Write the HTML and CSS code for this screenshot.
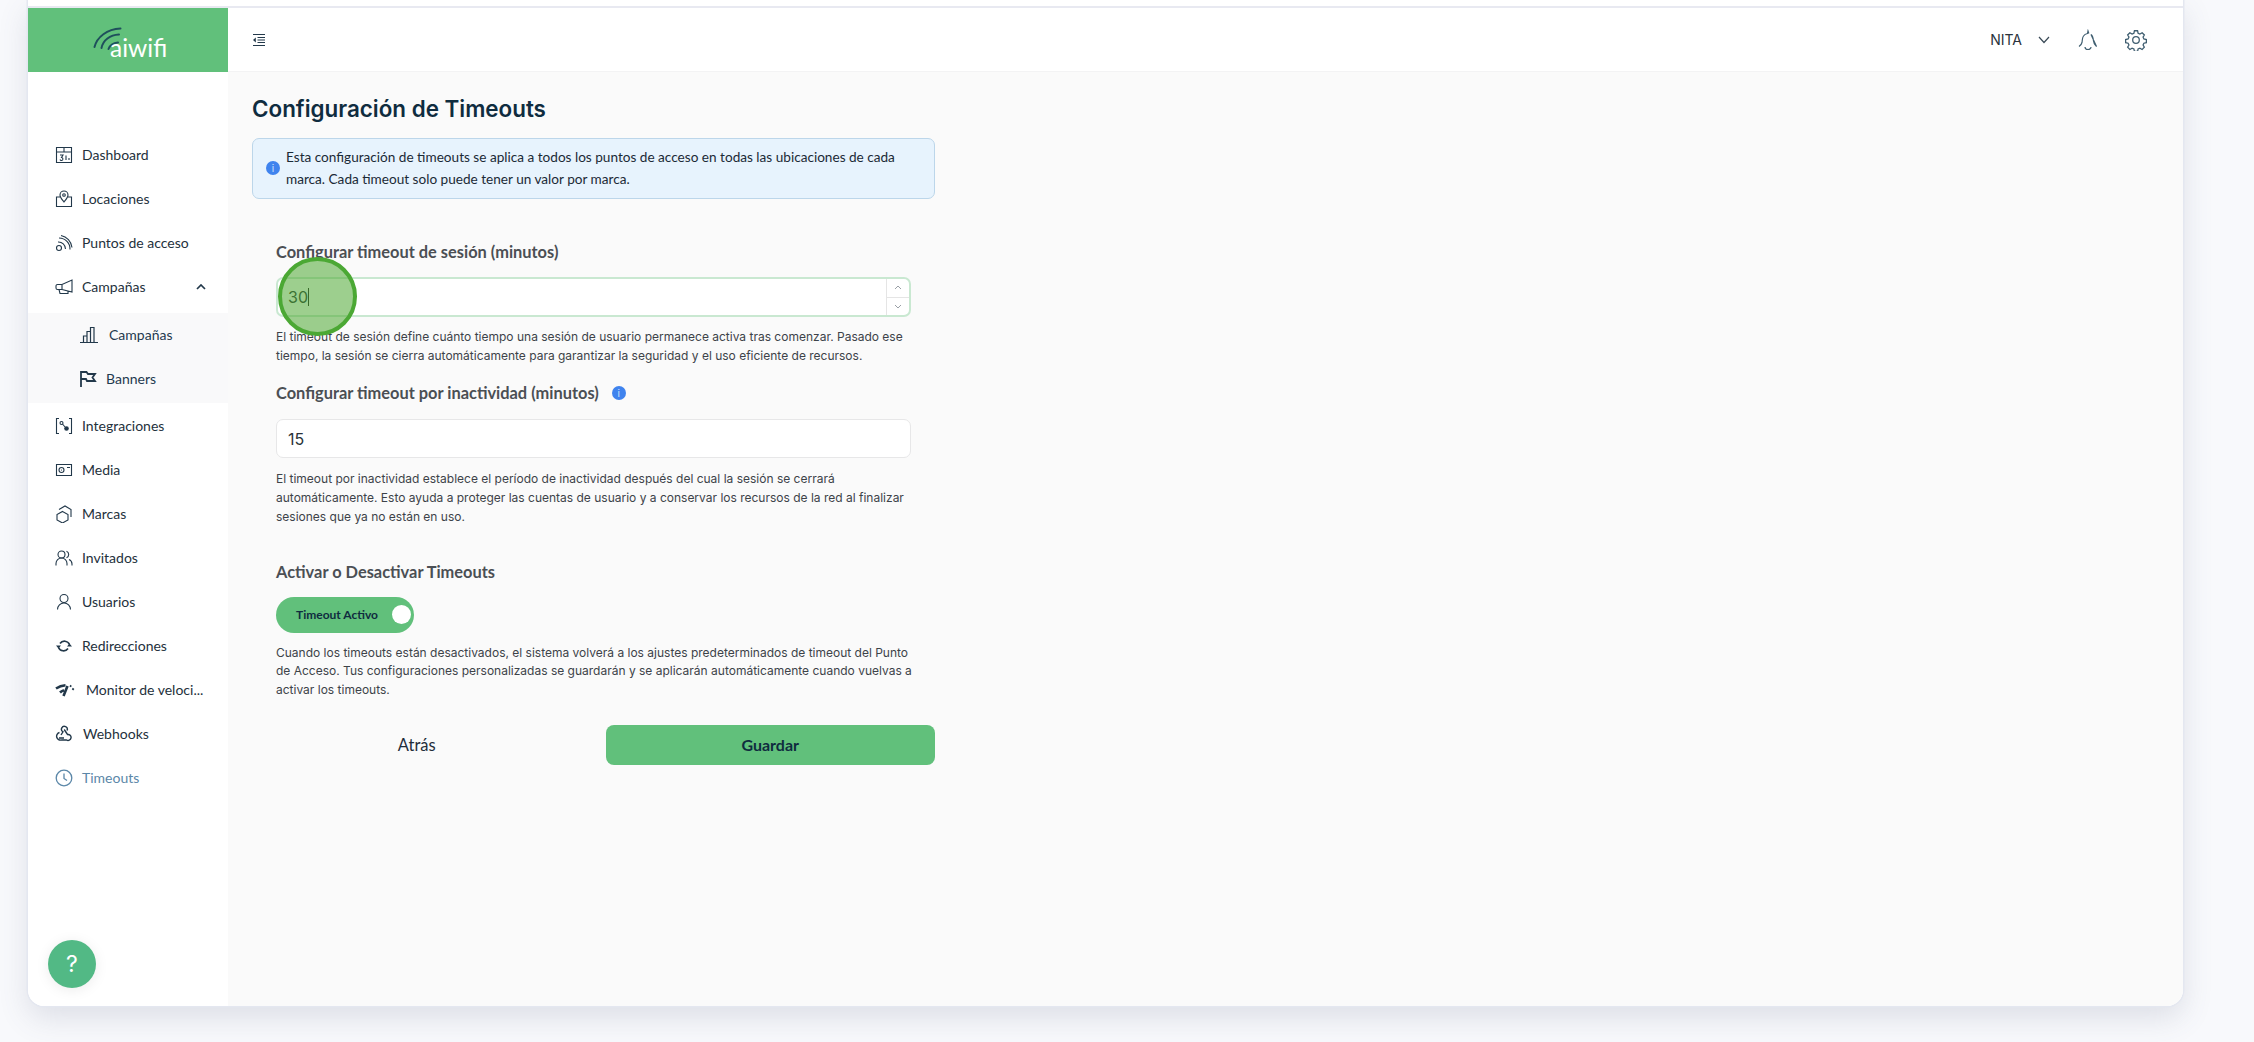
FILE: index.html
```html
<!DOCTYPE html>
<html lang="es">
<head>
<meta charset="utf-8">
<title>Configuración de Timeouts</title>
<link rel="stylesheet" href="styles.css">
</head>
<body>
<div class="window">
  <div class="strip"></div>
  <div class="app">
    <aside class="sidebar">
      <div class="logo">
        <svg class="logo-arcs" width="30" height="24" viewBox="0 0 30 24" fill="none" stroke="#1f4f5c" stroke-width="2" stroke-linecap="round"><path d="M1.500 20C4 10 14 2 27.500 1.500"/><path d="M8.500 21C10 13 17 8 26 7.500"/><path d="M15.500 22C17 18 20 16 25 15.500"/></svg>
        <span class="logo-text">aiwifi</span>
      </div>
      <nav class="nav">
        <a class="item"><svg class="ic" viewBox="0 0 18 18"><path d="M1.500 1.500h15v15h-15zM1.500 6h15M9 1.500V6M5 9h3l-1.500 2.500a1.500 1.500 0 1 1-1.500 2M11 9.500v4.500M14 12v2"/></svg>Dashboard</a>
        <a class="item"><svg class="ic" viewBox="0 0 18 18"><path d="M5 7H1.500v9.500h15V7H13M9 12C7 9.500 5 7.500 5 5a4 4 0 0 1 8 0c0 2.500-2 4.500-4 7z"/><circle cx="9" cy="5" r="1.300"/></svg>Locaciones</a>
        <a class="item"><svg class="ic" viewBox="0 0 18 18"><circle cx="4" cy="14" r="2.500"/><path d="M3 8a7 7 0 0 1 7.500 7M4 4a11 11 0 0 1 11 11.500M6 1.500a14 14 0 0 1 11 12"/></svg>Puntos de acceso</a>
        <a class="item"><svg class="ic" viewBox="0 0 18 18"><path d="M17 2v12L7 11.500H2.500A1.500 1.500 0 0 1 1 10V8a1.500 1.500 0 0 1 1.500-1.500H7zM4 11.500l1 4h8v-2.500M7 6.500v5"/></svg>Campañas<svg class="caret" viewBox="0 0 10 6"><path d="M1 5l4-4 4 4"/></svg></a>
        <div class="sub">
          <a class="item sub-a"><svg class="ic" viewBox="0 0 18 18"><path d="M0 16.500h18M3.500 16.500V10h3.500v6.500M7 16.500V5.500h3.500v11M10.500 16.500V1.500H14v15"/></svg>Campañas</a>
          <a class="item sub-b"><svg class="ic flag" viewBox="0 0 18 18"><path d="M2 17V2h5.500L9 4h7l-2.500 3.500L16 11H8L7 9H2"/></svg>Banners</a>
        </div>
        <a class="item"><svg class="ic" viewBox="0 0 18 18"><path d="M4 1.500H1.500v15H4M14 1.500h2.500v15H14"/><circle cx="6.500" cy="6" r="1.500"/><circle class="solid" cx="11.500" cy="11.500" r="2.300"/><path d="M7.500 7l2.500 3"/></svg>Integraciones</a>
        <a class="item"><svg class="ic" viewBox="0 0 18 18"><path d="M1.500 3.500h15v11h-15zM12 6.500h3"/><circle cx="6.500" cy="9" r="2.500"/><circle class="solid" cx="6.500" cy="9" r=".6"/></svg>Media</a>
        <a class="item"><svg class="ic" viewBox="0 0 18 18"><path d="M7.500 6.500l5.500 3v5.500l-5.500 3-5.500-3V9.500zM4 4.500L10 1l6 3.500V12"/></svg>Marcas</a>
        <a class="item"><svg class="ic" viewBox="0 0 18 18"><circle cx="6.500" cy="5.500" r="3.500"/><path d="M1 16.500v-2a5 5 0 0 1 11 0v2M11.500 2.200a3.500 3.500 0 0 1 0 6.500M14 10.500a5 5 0 0 1 3 4.500v1.500"/></svg>Invitados</a>
        <a class="item"><svg class="ic" viewBox="0 0 18 18"><circle cx="9" cy="5.500" r="4"/><path d="M2.500 16.500a6.500 6.500 0 0 1 13 0"/></svg>Usuarios</a>
        <a class="item"><svg class="ic ic-bold" viewBox="0 0 18 18"><path d="M14.500 7.500A5.500 5.500 0 0 0 5 6.500M3.500 10.500A5.500 5.500 0 0 0 13 11.500"/><path class="solid" d="M1 8.500h5L3.500 11.500zM17 9.500h-5l2.500-3z"/></svg>Redirecciones</a>
        <a class="item"><svg class="ic ic-mon" viewBox="0 0 20 14"><path d="M1 5.500C4 3.500 7 2.500 10.500 2.200M5 9.500c1-1 2.500-1.800 4-2.300M8.500 13L12.500 3"/><path class="dots" d="M15 2.500l1.300 1.200M17.300 5.500l1.500 1.200"/></svg><span class="trunc">Monitor de veloci...</span></a>
        <a class="item item-web"><svg class="ic ic-web" viewBox="0 0 18 18"><path d="M6 10L8 6.800A2.900 2.900 0 1 1 12 5.500M9.200 4.500L12.500 9.500A3 3 0 1 1 11.500 15H6.500M9 13H4M4.500 7.500A3.800 3.800 0 1 0 6.500 15"/></svg>Webhooks</a>
        <a class="item active"><svg class="ic" viewBox="0 0 18 18"><circle cx="9" cy="9" r="7.800"/><path d="M9 4.500V9.500l3 2"/></svg>Timeouts</a>
      </nav>
      <button class="help">?</button>
    </aside>
    <div class="right">
      <header class="top">
        <svg class="menu" viewBox="0 0 14 14"><path d="M1 1.500h12M5.500 4.500H13M5.500 7H13M5.500 9.500H13M1 12.500h12"/><path class="solid" d="M3.800 4.500v5L1 7z"/></svg>
        <div class="top-r">
          <span class="user">NITA</span>
          <svg class="chev" viewBox="0 0 12 8"><path d="M1 1l5 5.500L11 1"/></svg>
          <svg class="bell" viewBox="0 0 22 22"><path d="M2 17.500c1.500-1 2.500-2 3-4 .5-2.500 0-4.500 1.500-6.500 1-1.500 2.500-2.200 4-2.500L11 2l.8 2.500M14 5.500c2 1.500 2.200 3.500 2.500 6.500.2 2.500 1.200 4 3 5.500zM8 18a3 2.500 0 0 0 6 0"/></svg>
          <svg class="gear" viewBox="0 0 24 24"><path d="M10.300 1.900h3.400l.6 2.700 2 .9 2.400-1.400 2.400 2.400-1.400 2.400.9 2 2.700.6v3.400l-2.700.6-.9 2 1.400 2.400-2.400 2.400-2.400-1.400-2 .9-.6 2.700h-3.400l-.6-2.700-2-.9-2.400 1.400-2.400-2.400 1.400-2.400-.9-2-2.700-.6v-3.400l2.700-.6.9-2-1.400-2.400 2.400-2.400 2.400 1.400 2-.9z"/><circle cx="12" cy="12" r="3.600"/></svg>
        </div>
      </header>
      <main class="main">
        <div class="col">
          <h1 class="title">Configuración de Timeouts</h1>
          <div class="alert">
            <span class="info info-a">i</span>
            <p>Esta configuración de timeouts se aplica a todos los puntos de acceso en todas las ubicaciones de cada marca. Cada timeout solo puede tener un valor por marca.</p>
          </div>
          <section class="form">
            <label class="lbl l1">Configurar timeout de sesión (minutos)</label>
            <div class="field focus">
              <span class="val">30</span><span class="cursor"></span>
              <div class="step">
                <span class="step-b"><svg viewBox="0 0 8 5"><path d="M1 4l3-3 3 3"/></svg></span>
                <span class="step-b"><svg viewBox="0 0 8 5"><path d="M1 1l3 3 3-3"/></svg></span>
              </div>
            </div>
            <p class="hint h1">El timeout de sesión define cuánto tiempo una sesión de usuario permanece activa tras comenzar. Pasado ese tiempo, la sesión se cierra automáticamente para garantizar la seguridad y el uso eficiente de recursos.</p>
            <label class="lbl l2">Configurar timeout por inactividad (minutos)<span class="info info-b">i</span></label>
            <div class="field f2"><span class="val">15</span></div>
            <p class="hint h2">El timeout por inactividad establece el período de inactividad después del cual la sesión se cerrará automáticamente. Esto ayuda a proteger las cuentas de usuario y a conservar los recursos de la red al finalizar sesiones que ya no están en uso.</p>
            <label class="lbl l3">Activar o Desactivar Timeouts</label>
            <div class="toggle"><span>Timeout Activo</span><i class="knob"></i></div>
            <p class="hint h3">Cuando los timeouts están desactivados, el sistema volverá a los ajustes predeterminados de timeout del Punto de Acceso. Tus configuraciones personalizadas se guardarán y se aplicarán automáticamente cuando vuelvas a activar los timeouts.</p>
          </section>
          <div class="actions">
            <button class="btn back">Atrás</button>
            <button class="btn save">Guardar</button>
          </div>
        </div>
      </main>
    </div>
  </div>
  <div class="click"></div>
</div>
</body>
</html>
```

FILE: styles.css
```css
* { box-sizing: border-box; }
html, body { margin: 0; height: 100%; }
body {
  background: #f8f9fc;
  font-family: "Lato", sans-serif;
  color: #1f2d3a;
  overflow: hidden;
}
.window {
  position: relative;
  margin-left: 28px;
  width: 2155px;
  height: 1006px;
  background: #fff;
  border-radius: 0 0 16px 16px;
  box-shadow: 0 0 0 1.500px #e4e7f0, 0 12px 30px rgba(80, 90, 120, .16);
  display: flex;
  flex-direction: column;
}
.strip { height: 8px; flex: none; background: #fff; border-bottom: 2px solid #e8e9f1; }
.app { flex: 1; display: flex; min-height: 0; }
.sidebar {
  position: relative;
  width: 200px;
  flex: none;
  background: #fff;
  border-radius: 0 0 0 16px;
}
.logo { height: 64px; background: #61c07b; position: relative; }
.logo-arcs { position: absolute; left: 65px; top: 19px; }
.logo-text { position: absolute; left: 82px; top: 26px; color: #fff; font-size: 24.500px; font-weight: 400; line-height: 28px; }
.nav { padding-top: 60.500px; display: flex; flex-direction: column; }
.item {
  height: 44px;
  flex: none;
  display: flex;
  align-items: center;
  padding-left: 27px;
  gap: 9px;
  font-size: 14px;
  color: #24313c;
  position: relative;
}
.ic { width: 18px; height: 18px; flex: none; fill: none; stroke: #22384a; stroke-width: 1.100; }
.ic .solid, .solid { fill: #22384a; stroke: none; }
.ic-bold { stroke-width: 1.700; }
.ic-mon { width: 20px; height: 14px; stroke-width: 2.600; }
.ic-mon .dots { stroke-width: 1.800; }
.ic-web { stroke-width: 1.400; }
.trunc { margin-left: 2px; }
.caret { width: 10px; height: 6px; position: absolute; left: 168px; top: 19px; fill: none; stroke: #22384a; stroke-width: 1.700; }
.sub { background: #f9f9fa; margin-top: 4px; padding-bottom: 2px; margin-bottom: 1px; }
.sub .item { color: #1f3a4f; }
.sub-a { padding-left: 52px; gap: 11px; }
.sub-b { padding-left: 51px; gap: 9px; }
.sub .ic { stroke-width: 1.200; }
.flag { stroke-width: 1.800 !important; }
.item-web { gap: 10px; }
.active { color: #5b87a8; }
.active .ic { stroke: #5b87a8; stroke-width: 1.300; }
.help {
  position: absolute;
  left: 20px;
  bottom: 18px;
  width: 48px;
  height: 48px;
  border: 0;
  border-radius: 50%;
  background: #52b985;
  color: #fff;
  font: 400 23px "Inter", sans-serif;
  box-shadow: 0 2px 14px rgba(0, 0, 0, .08);
}
.right { flex: 1; display: flex; flex-direction: column; min-width: 0; }
.top {
  height: 64px;
  flex: none;
  background: #fff;
  border-bottom: 1px solid #f3f3f4;
  display: flex;
  align-items: center;
  justify-content: space-between;
  padding: 0 36px 0 24px;
}
.menu { width: 14px; height: 14px; fill: none; stroke: #22384a; stroke-width: 1; }
.top-r { display: flex; align-items: center; }
.user { font-size: 14px; font-family: "Inter", sans-serif; color: #2a333c; }
.chev { width: 12px; height: 8px; margin-left: 16px; fill: none; stroke: #3a4a57; stroke-width: 1.200; }
.bell { width: 22px; height: 22px; margin-left: 27px; fill: none; stroke: #3f5e70; stroke-width: 1.200; }
.gear { width: 22px; height: 22px; margin-left: 26px; fill: none; stroke: #3f5e70; stroke-width: 1.400; }
.main { flex: 1; background: #fafafa; padding: 22px 0 0 24px; border-radius: 0 0 16px 0; }
.col { width: 683px; }
.title { margin: 0; font: 600 22.400px/30px "Inter", sans-serif; color: #0f2c3f; }
.alert {
  margin-top: 14px;
  height: 61px;
  background: #e7f3fd;
  border: 1px solid #bcd6ea;
  border-radius: 7px;
  display: flex;
  align-items: center;
  padding: 0 0 1px 13px;
  gap: 6px;
}
.alert p { margin: 0 0 1px; font-size: 13.600px; line-height: 22px; color: #1b2a36; width: 640px; }
.info {
  display: inline-flex;
  align-items: center;
  justify-content: center;
  width: 14px;
  height: 14px;
  border-radius: 50%;
  background: #3f83ee;
  color: #cfe0fb;
  font: 400 10px "Inter", sans-serif;
  flex: none;
}
.form { padding: 0 24px; }
.lbl { display: block; font-size: 16.400px; line-height: 20px; font-weight: 700; color: #4b4f54; }
.l1 { margin-top: 43px; }
.l2 { margin-top: 18px; display: flex; align-items: center; }
.info-b { margin-left: 13px; }
.l3 { margin-top: 35px; }
.field {
  height: 39px;
  margin-top: 16px;
  background: #fff;
  border: 1px solid #e7e7e8;
  border-radius: 7px;
  display: flex;
  align-items: center;
  padding-left: 11px;
  position: relative;
  font: 400 16px "Inter", sans-serif;
  color: #2a3238;
}
.focus { height: 40px; margin-top: 15px; border: 2px solid #c9e8d1; padding-left: 10px; }
.cursor { display: inline-block; width: 1px; height: 18px; background: #222; }
.step { position: absolute; right: 0; top: 0; bottom: 0; width: 23px; border-left: 1px solid #e5e5e5; display: flex; flex-direction: column; }
.step-b { flex: 1; display: flex; align-items: center; justify-content: center; }
.step-b + .step-b { border-top: 1px solid #e5e5e5; }
.step svg { width: 8px; height: 5px; fill: none; stroke: #9aa0a6; stroke-width: 1; }
.hint { margin: 0; font: 400 12px/18.700px "Inter", sans-serif; color: #3d4349; }
.h1 { margin-top: 11px; }
.h2 { margin-top: 12px; }
.h3 { margin: 11px -8px 0 0; }
.toggle {
  margin-top: 15px;
  width: 138px;
  height: 36px;
  background: #61c07b;
  border-radius: 18px;
  display: flex;
  align-items: center;
  justify-content: space-between;
  padding: 0 2px 0 20px;
  font: 700 12px "Lato", sans-serif;
  color: #0f2c3f;
}
.knob { width: 19px; height: 19px; border-radius: 50%; background: #fff; margin-right: 1px; }
.actions { margin-top: 25px; display: flex; gap: 24px; }
.btn { flex: 1; height: 40px; border: 0; border-radius: 8px; font: 700 16px "Lato", sans-serif; color: #0f2c3f; background: transparent; }
.back { font-weight: 400; font-size: 16.500px; color: #1f2d3a; }
.save { background: #61c07b; }
.click {
  position: absolute;
  left: 250px;
  top: 257px;
  width: 79px;
  height: 79px;
  border-radius: 50%;
  border: 4px solid #4ba834;
  background: rgba(76, 168, 50, .55);
}
```
